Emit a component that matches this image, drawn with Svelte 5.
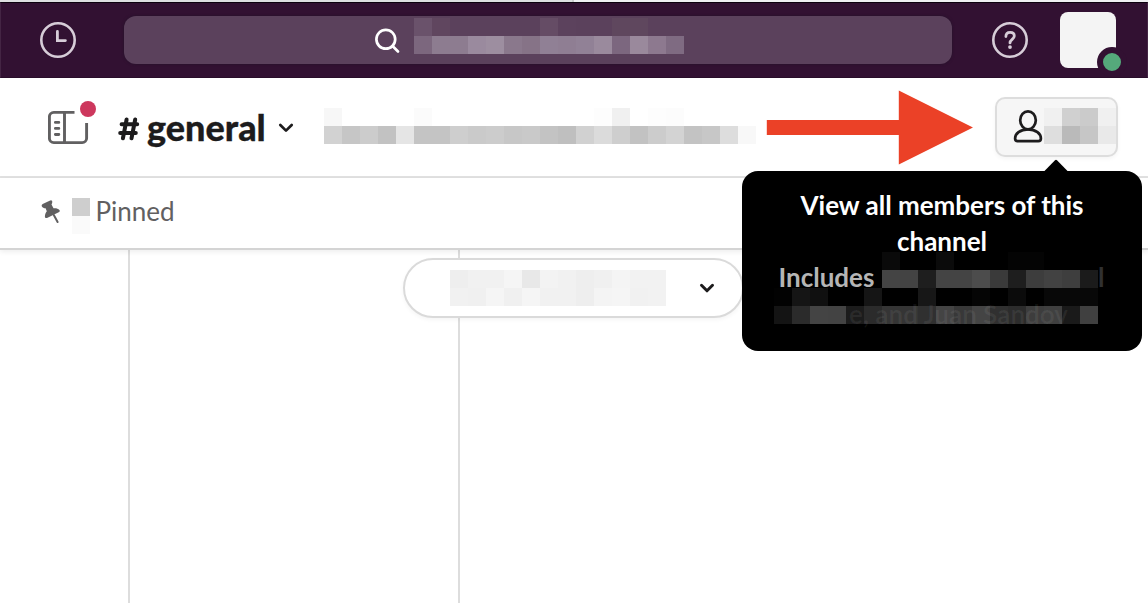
<script>
  const search = [
    '#6a526b #60465f . . . . . #654c65 #5c425d . . #5f475e #5f475e . .',
    '#7c677e #8d7c90 #8d7c90 #9a8a9e #9d8ea0 #8a788c #867387 #908095 #8f7e93 #918196 #9a8a9d #7c677f #9a899c #8d798f #7f6b82'
  ];
  const topic = [
    '#f7f7f7 . . . . #fbfbfb . . . . . . . . . #fdfdfd #f0f0f0 . #fdfdfd #fcfcfc . . . .',
    '#d2d2d2 #c6c6c6 #cccccc #c2c2c2 #e5e5e5 #c4c4c4 #c4c4c4 #cecece #cacaca #cccccc #c7c7c7 #c9c9c9 #c3c3c3 #bfbfbf #d1d1d1 #dbdbdb #cecece #c2c2c2 #cccccc #d3d3d3 #c3c3c3 #c7c7c7 #dddddd #f8f8f8'
  ];
  const count = ['#f0f0f0 #d0d0d0 #cbcbcb #f0f0f0', '#dedede #bababa #c6c6c6 #e9e9e9'];
  const pinned = ['#cecece', '#fafafa'];
  const date = [
    '#eeeeee #f1f1f1 #f1f1f1 #f5f5f5 #e8e8e8 #f3f3f3 #f1f1f1 #eeeeee #f0f0f0 #f4f4f4 #f2f2f2 #f2f2f2',
    '#f1f1f1 #f0f0f0 #f5f5f5 #f0f0f0 #f5f5f5 #f1f1f1 #f1f1f1 #eeeeee #f4f4f4 #f5f5f5 #f1f1f1 #f2f2f2'
  ];
  const names = [
    '. . . . . . #0a0a0a . . #0b0b0b . . . #040404 #040404 . . .',
    '. . . . . . #444444 #434343 #1e1e1e #444444 #444444 #4c4c4c #3a3a3a #1e1e1e #3d3d3d #424242 #3e3e3e #1b1b1b',
    '#020202 #151515 #101010 . . #151515 . . #171717 . . #050505 . #0b0b0b . #080808 #080808 #080808',
    '#141414 #2b2b2b #444444 #434343 #1c1c1c #2b2b2b #353535 #353535 #303030 #444444 #383838 #444444 #303030 #2c2c2c #3d3d3d #404040 #1a1a1a #404040'
  ];
</script>

{#snippet mosaic(rows)}
  <div class="mosaic" aria-hidden="true">
    {#each rows as row}
      <div class="line">
        {#each row.split(' ') as c}
          <i style:background={c === '.' ? 'transparent' : c}></i>
        {/each}
      </div>
    {/each}
  </div>
{/snippet}

<div class="window">
  <div class="strip"><span></span></div>
  <header class="top">
    <svg class="clock" width="36" height="36" viewBox="0 0 36 36" fill="none" stroke="#d7cdd8">
      <circle cx="18" cy="18" r="16.7" stroke-width="2.6" />
      <path d="M17.400 9.500v9.100h8" stroke-width="2.8" stroke-linecap="round" />
    </svg>
    <div class="search">
      <svg width="26" height="26" viewBox="0 0 26 26" fill="none" stroke="#fff" stroke-width="2.7" stroke-linecap="round">
        <circle cx="11.8" cy="11.3" r="9.4" />
        <path d="M18.500 18l5.500 5.500" />
      </svg>
      {@render mosaic(search)}
    </div>
    <svg class="help" width="36" height="36" viewBox="0 0 36 36" fill="none" stroke="#d7cdd8">
      <circle cx="18" cy="18" r="16.7" stroke-width="2.6" />
      <path d="M13.9 14.5c0-2.5 1.6-4.2 4.2-4.2 2.5 0 4.200 1.5 4.200 3.7 0 3.2-4.300 3.5-4.300 6.9" stroke-width="2.8" stroke-linecap="round" />
      <circle cx="18" cy="25.1" r="1.9" fill="#d7cdd8" stroke="none" />
    </svg>
    <div class="avatar"><span class="presence"></span></div>
  </header>

  <section class="channel">
    <svg class="sidebar" width="48" height="44" viewBox="0 0 48 44" fill="none" stroke="#616061" stroke-width="2.9">
      <path d="M26.5 11.4H5.8a4.4 4.4 0 0 0-4.4 4.4v21.4a4.4 4.4 0 0 0 4.4 4.4h28.4a4.4 4.4 0 0 0 4.4-4.4V22M16.5 11.4v30.2" />
      <path d="M7.4 21.4h3.4M7.4 27.4h3.4M7.4 33.5h3.4" stroke-linecap="round" />
      <circle cx="40" cy="8" r="8" fill="#cd375d" stroke="none" />
    </svg>
    <h1>
      <svg width="22" height="26" viewBox="0 0 22 26" fill="none" stroke="#1d1c1d" stroke-width="4" stroke-linecap="round">
        <path d="M8.6 3.500L4.9 22.300M17.200 3.500l-3.700 18.800M3.600 8.300h15.600M2.200 16.900h15.600" />
      </svg><span>general</span>
    </h1>
    <svg class="chev" width="16" height="10" viewBox="0 0 16 10" fill="none" stroke="#1d1c1d" stroke-width="2.7" stroke-linecap="round" stroke-linejoin="round">
      <path d="M2.3 2l5.7 5.6L13.7 2" />
    </svg>
    <div class="topic">{@render mosaic(topic)}</div>
    <svg class="arrow" width="207" height="76" viewBox="0 0 207 76">
      <path d="M.8 30H132.800V.5L207 37.500 132.800 74.500V45H.8z" fill="#eb4127" />
    </svg>
    <div class="members">
      <svg width="30" height="36" viewBox="0 0 30 36" fill="none" stroke="#1d1c1d" stroke-width="2.700">
        <ellipse cx="15" cy="12.300" rx="7.800" ry="9" />
        <path d="M15 21.400C7 21.400 2.100 25.800 2.100 30.500c0 1.800.9 2.700 2.600 2.700h20.600c1.700 0 2.600-.9 2.600-2.700 0-4.700-4.900-9.100-12.900-9.100z" />
      </svg>
      {@render mosaic(count)}
      <div class="tooltip">
        <svg class="tip" width="24" height="13" viewBox="0 0 24 13"><path d="M0 12.500L11 1.200Q12 .2 13 1.200L24 12.500V13H0z" /></svg>
        <div>View all members of this<br />channel</div>
        <div class="includes">Includes</div>
        <div class="names">{@render mosaic(names)}</div>
        <div class="faint">e, and Juan Sandov</div>
        <div class="edge">l</div>
      </div>
    </div>
  </section>

  <section class="bookmarks">
    <svg width="20" height="24" viewBox="0 0 20 24">
      <path d="M8.600.7Q10.500-.2 11.100 1c.4.900.1 2.200-.6 3.600l2 3.700c2.500-.2 4.800.3 5.900 1.700.7 1 .3 1.900-.7 2.300L6 17.900c-1.300.5-2.100 0-2.100-1.300 0-1.900.6-3.800 1.900-5.300L4.600 8.200C2.800 8.100 1.500 7.600.9 6.400.4 5.400.7 4.400 1.700 3.900z" fill="#616061" />
      <path d="M12.800 15l3.800 7" stroke="#616061" stroke-width="2" stroke-linecap="round" />
    </svg>
    {@render mosaic(pinned)}
    <span>Pinned</span>
  </section>

  <main>
    <div class="rail"></div>
    <div class="rail second"></div>
    <div class="date">
      {@render mosaic(date)}
      <svg width="16" height="11" viewBox="0 0 16 11" fill="none" stroke="#1d1c1d" stroke-width="3" stroke-linecap="round" stroke-linejoin="round">
        <path d="M2.500 2.300L8 7.800l5.500-5.500" />
      </svg>
    </div>
  </main>
</div>

<style>
  :global(body) { margin: 0; }
  .window { width: 1148px; height: 603px; overflow: hidden; display: flex; flex-direction: column; background: #fff; color: #1d1c1d; font-family: Lato, sans-serif; }
  .window * { box-sizing: border-box; }
  svg { display: block; flex: none; }
  .strip { height: 2px; flex: none; background: #f0f0f3; }
  .strip span { display: block; width: 574px; height: 2px; background: #dedfe1; border-right: 2px solid #c9cacc; }
  .top { height: 76px; flex: none; display: flex; align-items: center; padding: 0 31px 0 39px; background: #321132; border: 1px solid #442544; border-top-color: #0d020f; border-bottom-color: #290d2a; }
  .search { width: 828px; height: 48px; margin: 0 40px 0 48px; padding: 2px 0 10px 250px; display: flex; background: #5b415c; border-radius: 12px; box-shadow: 0 0 3px #24122a; }
  .search svg { margin: 10px 14px 0 0; }
  .avatar { position: relative; width: 56px; height: 56px; margin-left: 32px; border-radius: 8px; background: #f4f4f4; }
  .presence { position: absolute; left: 37px; top: 35px; width: 30px; height: 30px; border: 6px solid #321132; border-radius: 50%; background: #55a97b; }
  .line { display: flex; }
  .line i { width: 18px; height: 18px; flex: none; }
  .channel { height: 100px; flex: none; display: flex; align-items: flex-start; padding: 0 30px 0 48px; border-bottom: 2px solid #e1e1e1; }
  .sidebar { margin-top: 23px; }
  h1 { display: flex; width: 147px; margin: 26px 0 0 23px; font-size: 36px; line-height: 46px; font-weight: 900; }
  h1 svg { margin: 12px 7px 0 -1px; }
  h1 span { -webkit-text-stroke: 0.3px #1d1c1d; }
  .chev { margin: 45px 0 0 12px; }
  .topic { width: 432px; margin: 30px 10px 0 30px; }
  .arrow { margin-top: 12px; }
  .members { position: relative; display: flex; width: 123px; height: 60px; flex: none; margin: 19px 0 0 22px; padding: 9px 0 0 16px; border: 2px solid #dddddd; border-radius: 10px; background: #f6f6f6; box-shadow: 0 2px 4px #0000000b; }
  .members > svg { margin: 0 1px 0 0; }
  .members > :global(.mosaic) { width: 72px; }
  .tooltip { position: absolute; z-index: 2; left: -255px; top: 72px; width: 400px; height: 180px; padding: 16px 0 0 0; border-radius: 16px; background: #000; color: #fff; text-align: center; font-size: 26px; line-height: 36px; font-weight: 700; }
  .tip { position: absolute; left: 302px; top: -12px; }
  .includes { padding-left: 36.5px; text-align: left; color: #b5b5b5; }
  .names { position: absolute; left: 32px; top: 81px; }
  .faint { position: absolute; left: 107px; top: 125px; white-space: nowrap; color: #ffffff10; }
  .edge { position: absolute; left: 356px; top: 88px; color: #303030; }
  .bookmarks { height: 72px; flex: none; display: flex; padding: 20px 0 0 41px; border-bottom: 2px solid #d4d4d4; box-shadow: 0 2px 5px #00000012; position: relative; font-size: 26px; line-height: 28px; color: #616061; }
  .bookmarks svg { margin: 2px 11px 0 0; }
  .bookmarks span { margin: -1px 0 0 5.5px; }
  main { flex: 1; display: flex; }
  .rail { width: 130px; border-right: 2px solid #dddddd; }
  .second { width: 330px; }
  .date { display: flex; flex: none; position: relative; width: 341px; height: 60px; margin: 8px 0 0 -57px; padding: 10px 0 0 45px; border: 2px solid #dadada; border-radius: 30px; background: #fff; box-shadow: 0 2px 4px #0000000b; }
  .date svg { margin: 13px 0 0 33px; }
</style>
